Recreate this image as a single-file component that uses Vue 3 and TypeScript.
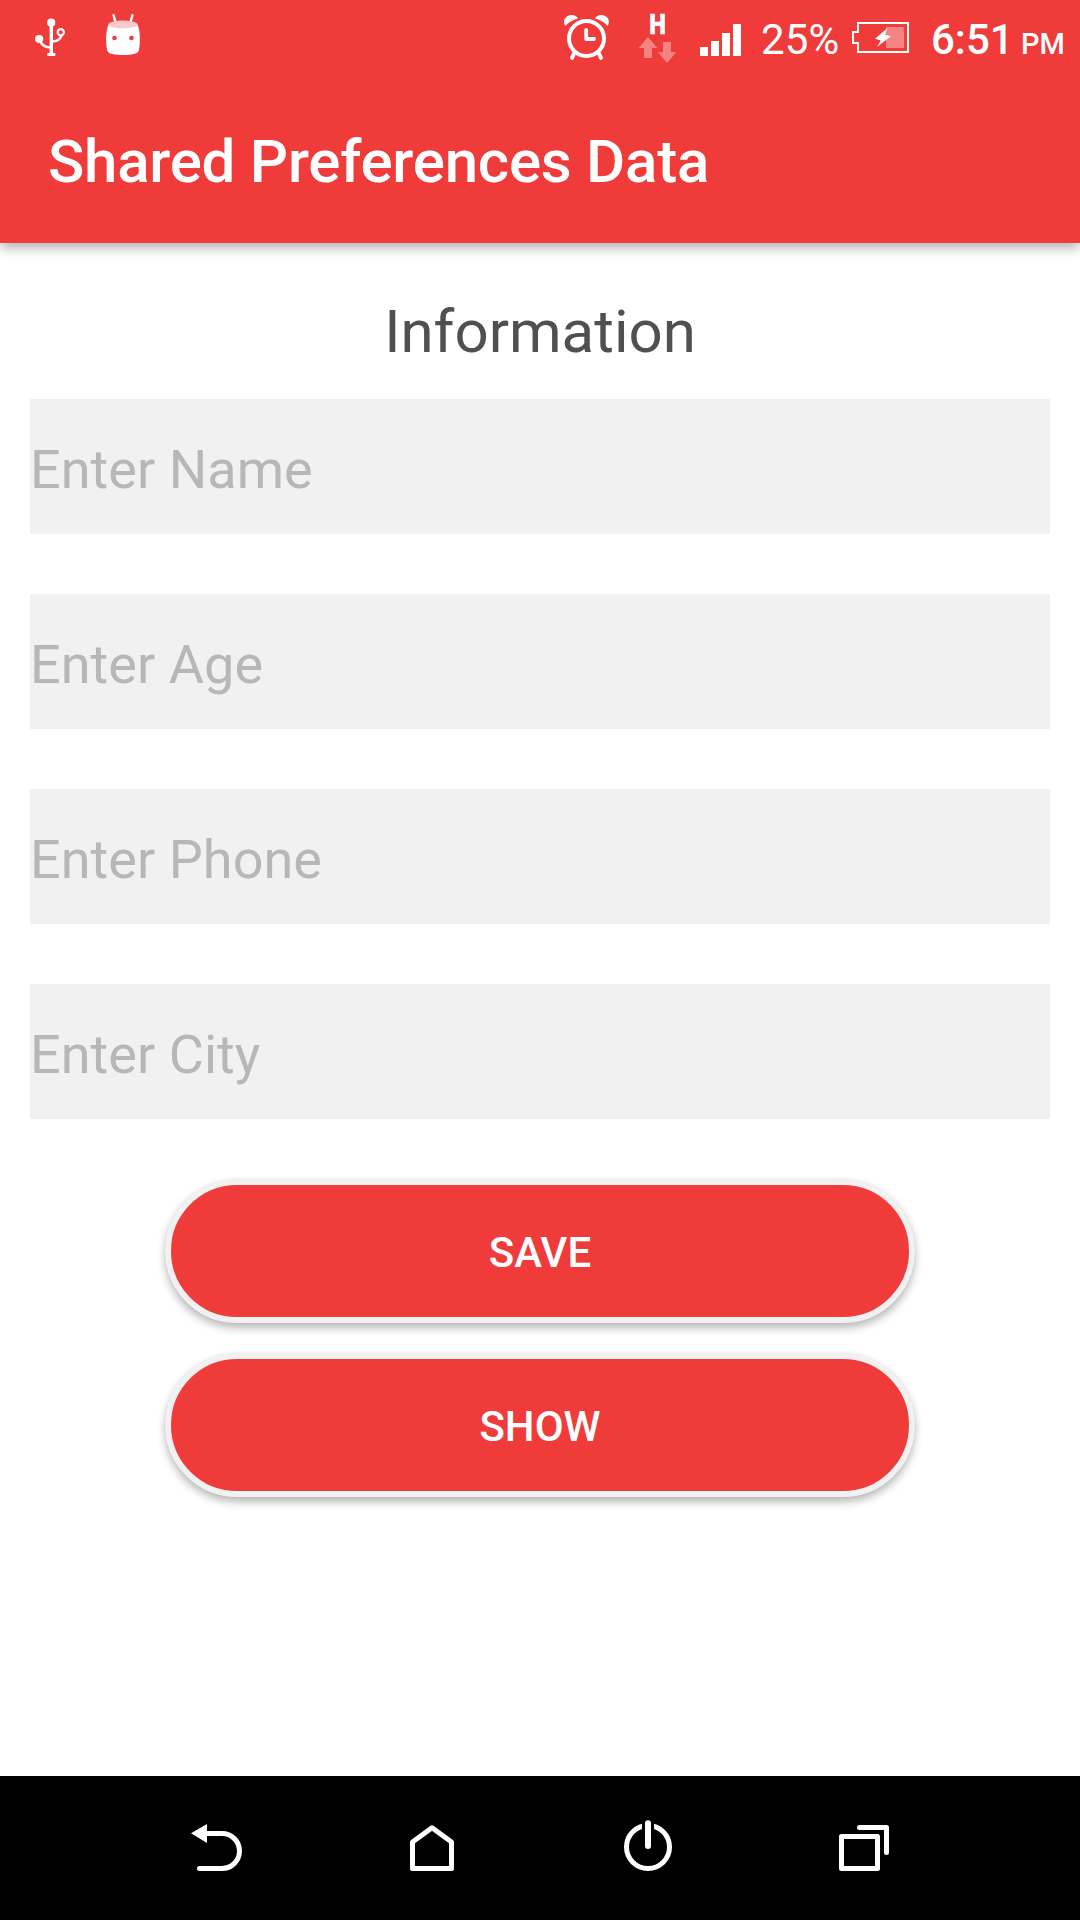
<script setup lang="ts">
import { reactive } from 'vue'

interface Field {
  key: string
  hint: string
}

const fields: Field[] = [
  { key: 'name', hint: 'Enter Name' },
  { key: 'age', hint: 'Enter Age' },
  { key: 'phone', hint: 'Enter Phone' },
  { key: 'city', hint: 'Enter City' },
]

const form = reactive<Record<string, string>>({ name: '', age: '', phone: '', city: '' })
const actions: string[] = ['SAVE', 'SHOW']
</script>

<template>
  <div class="screen">
    <header class="top">
      <div class="status">
        <svg class="usb" width="40" height="75" viewBox="30 0 40 75" fill="none" stroke="#fff">
          <circle cx="51.2" cy="22.7" r="4.1" fill="#fff" stroke="none" />
          <circle cx="39.2" cy="39" r="4.1" fill="#fff" stroke="none" />
          <circle cx="60.8" cy="32.2" r="3.1" stroke-width="2.2" />
          <path d="M51.300 23V54" stroke-width="3.4" />
          <path d="M40 41C42 45.500 46 47.500 51 47.500M61.500 35.500C60.500 39.500 57 41.300 51.500 41.500" stroke-width="2.5" />
          <path d="M47.300 53h8v3h-8z" fill="#fff" stroke="none" />
        </svg>
        <svg class="droid" width="46" height="75" viewBox="100 0 46 75">
          <path d="M113.600 15.200l2 7.300M132.400 15.200l-2 7.300" stroke="#fff" stroke-width="2.4" stroke-linecap="round" />
          <path d="M108.500 24.500C105.800 31 105.400 42 107.200 50.500C108 54 115 55 123 55S138 54 138.800 50.500C140.600 42 140.200 31 137.500 24.500Z" fill="#fff" />
          <ellipse cx="123" cy="24.5" rx="14.6" ry="3.9" fill="#fcc9c9" />
          <circle cx="114.5" cy="38" r="2.3" fill="#ef3b3a" />
          <circle cx="131.5" cy="38" r="2.3" fill="#ef3b3a" />
        </svg>
        <div class="tray">
          <svg width="52" height="75" viewBox="560 0 52 75" fill="none" stroke="#fff" stroke-width="4" stroke-linecap="round">
            <circle cx="586.5" cy="38.5" r="17.5" />
            <path d="M586.200 30V39H594" stroke-width="3.8" stroke-linejoin="round" />
            <path d="M574 53.500L572 57.800M599 53.500L601 57.800" />
            <path d="M565.200 26C562.500 20.500 565 16.800 569 15.500C573 14.200 576.500 15.800 578 18.500Q570 20.500 565.200 26ZM607.800 26C610.500 20.500 608 16.800 604 15.500C600 14.200 596.500 15.800 595 18.500Q603 20.500 607.800 26Z" fill="#fff" stroke="none" />
          </svg>
          <svg class="net" width="44" height="75" viewBox="636 0 44 75">
            <text x="649.2" y="33.5" textLength="16.6" lengthAdjust="spacingAndGlyphs" class="net-label">H</text>
            <path d="M648 37l9.300 11H652v10h-8V48h-5.300zM663 42h8v10h5.300L667 63l-9.300-11H663z" fill="#fff" fill-opacity=".37" />
          </svg>
          <svg class="signal" width="41" height="75" viewBox="700 0 41 75" fill="#fff">
            <path d="M700 47h8v9h-8zM711 41h8v15h-8zM722 33h8v23h-8zM733 24h8v32h-8z" />
          </svg>
          <span class="percent">25%</span>
          <svg class="battery" width="57" height="75" viewBox="852 0 57 75">
            <path d="M858 23H908V52H858V43H853V32H858Z" fill="none" stroke="#fff" stroke-width="2" />
            <path d="M886 27h18v21h-18z" fill="#fff" fill-opacity=".37" />
            <path d="M887.500 28L875 38.800L880.800 40.500L877 47L891 36.300L885.300 34.800Z" fill="#fff" />
          </svg>
          <span class="clock">6:51</span>
          <span class="meridiem">PM</span>
        </div>
      </div>
      <h1 class="title">Shared Preferences Data</h1>
    </header>

    <main class="content">
      <h2 class="heading">Information</h2>
      <form class="form" @submit.prevent>
        <input
          v-for="f in fields"
          :key="f.key"
          v-model="form[f.key]"
          class="field"
          type="text"
          :placeholder="f.hint"
        />
        <div class="actions">
          <button v-for="a in actions" :key="a" class="action" type="button">{{ a }}</button>
        </div>
      </form>
    </main>

    <nav class="nav">
      <svg viewBox="0 0 216 144">
        <path d="M97 57.500H114A17.500 17.500 0 0 1 114 92.500H91.500" />
        <path d="M83 57.300L99 48V67Z" fill="#fff" stroke="none" />
      </svg>
      <svg viewBox="0 0 216 144">
        <path d="M88.500 66L108 51.800L127.500 66V92.500H88.500Z" />
      </svg>
      <svg viewBox="0 0 216 144">
        <circle cx="108" cy="71" r="21.500" />
        <path d="M102 44h12v16h-12z" fill="#000" stroke="none" />
        <path class="bar" d="M108 47.200V70" />
      </svg>
      <svg viewBox="0 0 216 144">
        <path d="M85.500 60.500H121.500V92.500H85.500ZM103.500 51.500H130.500V76.500" />
      </svg>
    </nav>
  </div>
</template>

<style>
body {
  margin: 0;
}
</style>

<style scoped>
.screen {
  display: flex;
  flex-direction: column;
  width: 1080px;
  height: 1920px;
  overflow: hidden;
  background: #fff;
  font-family: Roboto, "Liberation Sans", sans-serif;
}

svg {
  display: block;
  flex: none;
}

.top {
  flex: none;
  height: 243px;
  background: #ef3b3a;
  color: #fff;
  box-shadow: 0 4px 12px rgba(0, 0, 0, 0.34);
}

.status {
  display: flex;
  height: 75px;
  padding-left: 30px;
}

.droid {
  margin-left: 30px;
}

.tray {
  display: flex;
  margin-left: auto;
  line-height: 80px;
  white-space: nowrap;
}

.net {
  margin-left: 24px;
}

.net-label {
  font-size: 28px;
  font-weight: 900;
  fill: #fff;
  stroke: #fff;
  stroke-width: 0.6px;
}

.signal {
  margin-left: 20px;
}

.percent {
  width: 91px;
  padding-left: 20px;
  box-sizing: border-box;
  margin-right: 20px;
  font-size: 42px;
  letter-spacing: 0.2px;
}

.clock {
  width: 90px;
  margin-left: 22px;
  font-size: 42px;
  font-weight: 500;
}

.meridiem {
  width: 59px;
  font-size: 29px;
  font-weight: 500;
  line-height: 89px;
}

.title {
  margin: 0;
  padding-left: 48px;
  font-size: 60px;
  font-weight: 500;
  line-height: 174px;
  letter-spacing: -0.24px;
}

.content {
  flex: 1;
  padding: 0 30px;
}

.heading {
  height: 156px;
  margin: 0;
  font-size: 60px;
  font-weight: 400;
  line-height: 178px;
  text-align: center;
  color: #505050;
}

.form {
  display: flex;
  flex-direction: column;
  gap: 60px;
}

.field {
  box-sizing: border-box;
  width: 100%;
  height: 135px;
  padding: 6px 0 0;
  border: 0;
  border-radius: 0;
  outline: 0;
  background: #f1f1f1;
  font: 400 54px Roboto, "Liberation Sans", sans-serif;
  letter-spacing: 0.04px;
  color: #505050;
}

.field::placeholder {
  color: #b7b7b7;
  opacity: 1;
}

.actions {
  display: flex;
  flex-direction: column;
  align-items: center;
  gap: 30px;
}

.action {
  box-sizing: border-box;
  width: 750px;
  height: 144px;
  padding: 2px 0 0;
  border: 6px solid #f1f1f1;
  border-radius: 72px;
  background: #ef3b3a;
  box-shadow: 0 5px 8px rgba(0, 0, 0, 0.28), 0 0 2px rgba(0, 0, 0, 0.08);
  font: 500 42px Roboto, "Liberation Sans", sans-serif;
  color: #fff;
}

.nav {
  display: flex;
  flex: none;
  justify-content: center;
  height: 144px;
  background: #000;
}

.nav svg {
  width: 216px;
  height: 144px;
  fill: none;
  stroke: #fff;
  stroke-width: 5;
  stroke-linecap: round;
  stroke-linejoin: round;
}

.nav .bar {
  stroke-width: 6;
}
</style>
